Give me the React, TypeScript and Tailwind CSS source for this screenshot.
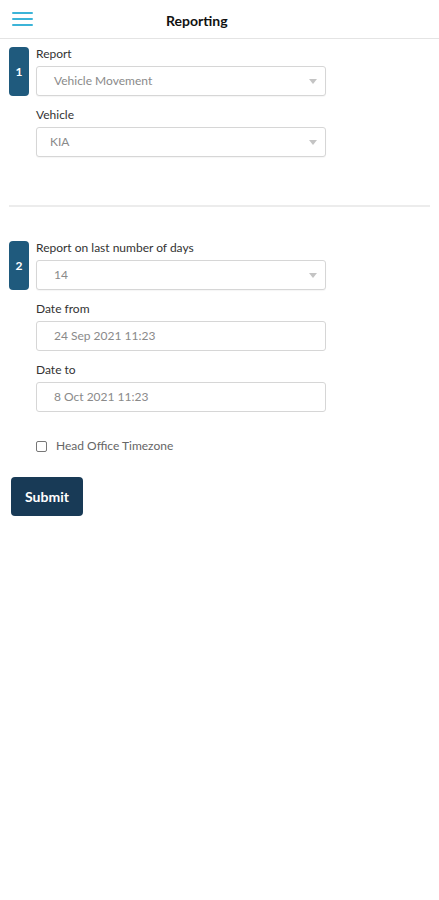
import React, { useState } from 'react';

const font = { fontFamily: 'Lato, "Noto Sans", sans-serif' };

const Caret = () => (
  <svg width="8" height="5" viewBox="0 0 8 5" className="shrink-0">
    <path d="M0 0 L8 0 L4 5 Z" fill="#c4c4c4" />
  </svg>
);

const SelectBox: React.FC<{ value: string; indent?: boolean }> = ({ value, indent }) => (
  <div className="h-[30px] w-[290px] rounded-[3px] border border-[#d6d6d6] flex items-center justify-between pr-[8px] bg-white shadow-[0_1px_1px_rgba(0,0,0,0.04)]">
    <span className={`text-[12px] text-[#8a8a8a] ${indent ? 'pl-[17px]' : 'pl-[13px]'}`}>{value}</span>
    <Caret />
  </div>
);

const InputBox: React.FC<{ value: string }> = ({ value }) => (
  <div className="h-[30px] w-[290px] rounded-[3px] border border-[#d6d6d6] flex items-center pl-[17px] bg-white">
    <span className="text-[12px] text-[#8a8a8a]">{value}</span>
  </div>
);

const Step: React.FC<{ n: string }> = ({ n }) => (
  <div className="w-[20px] h-[49px] rounded-[4px] bg-[#1f5a7d] flex items-center justify-center text-white text-[12px] font-bold shrink-0">
    {n}
  </div>
);

const Label: React.FC<{ children: React.ReactNode }> = ({ children }) => (
  <div className="text-[12px] text-[#333] leading-[14px] mb-[5px]">{children}</div>
);

const App: React.FC = () => {
  const [headOffice, setHeadOffice] = useState(false);

  return (
    <div className="w-[439px] min-h-[900px] bg-white" style={font}>
      {/* Header */}
      <div className="h-[39px] border-b border-[#e4e4e4] flex items-center relative">
        <button className="ml-[12px] w-[21px] flex flex-col gap-[4px]">
          <span className="block h-[2px] bg-[#3cb4d8] rounded" />
          <span className="block h-[2px] bg-[#3cb4d8] rounded" />
          <span className="block h-[2px] bg-[#3cb4d8] rounded" />
        </button>
        <div className="absolute left-[166px] top-[10px] text-[14px] font-bold text-[#111]">Reporting</div>
      </div>

      {/* Section 1 */}
      <div className="flex pl-[9px] pt-[8px] gap-[7px]">
        <Step n="1" />
        <div className="flex flex-col">
          <Label>Report</Label>
          <SelectBox value="Vehicle Movement" indent />
          <div className="mt-[12px]">
            <Label>Vehicle</Label>
            <SelectBox value="KIA" />
          </div>
        </div>
      </div>

      <div className="mx-[9px] mt-[48px] border-t-2 border-[#ececec]" />

      {/* Section 2 */}
      <div className="flex pl-[9px] pt-[34px] gap-[7px]">
        <Step n="2" />
        <div className="flex flex-col">
          <Label>Report on last number of days</Label>
          <SelectBox value="14" indent />
          <div className="mt-[12px]">
            <Label>Date from</Label>
            <InputBox value="24 Sep 2021 11:23" />
          </div>
          <div className="mt-[12px]">
            <Label>Date to</Label>
            <InputBox value="8 Oct 2021 11:23" />
          </div>
          <label className="mt-[25px] flex items-center gap-[9px] cursor-pointer">
            <input
              type="checkbox"
              checked={headOffice}
              onChange={e => setHeadOffice(e.target.checked)}
              className="w-[11px] h-[11px] appearance-none border border-[#777] rounded-[2px] bg-white"
            />
            <span className="text-[12px] text-[#666]">Head Office Timezone</span>
          </label>
        </div>
      </div>

      <div className="pl-[11px] pt-[22px]">
        <button className="w-[72px] h-[39px] rounded-[4px] bg-[#183a56] text-white text-[14px] font-bold">
          Submit
        </button>
      </div>
    </div>
  );
};

export default App;
